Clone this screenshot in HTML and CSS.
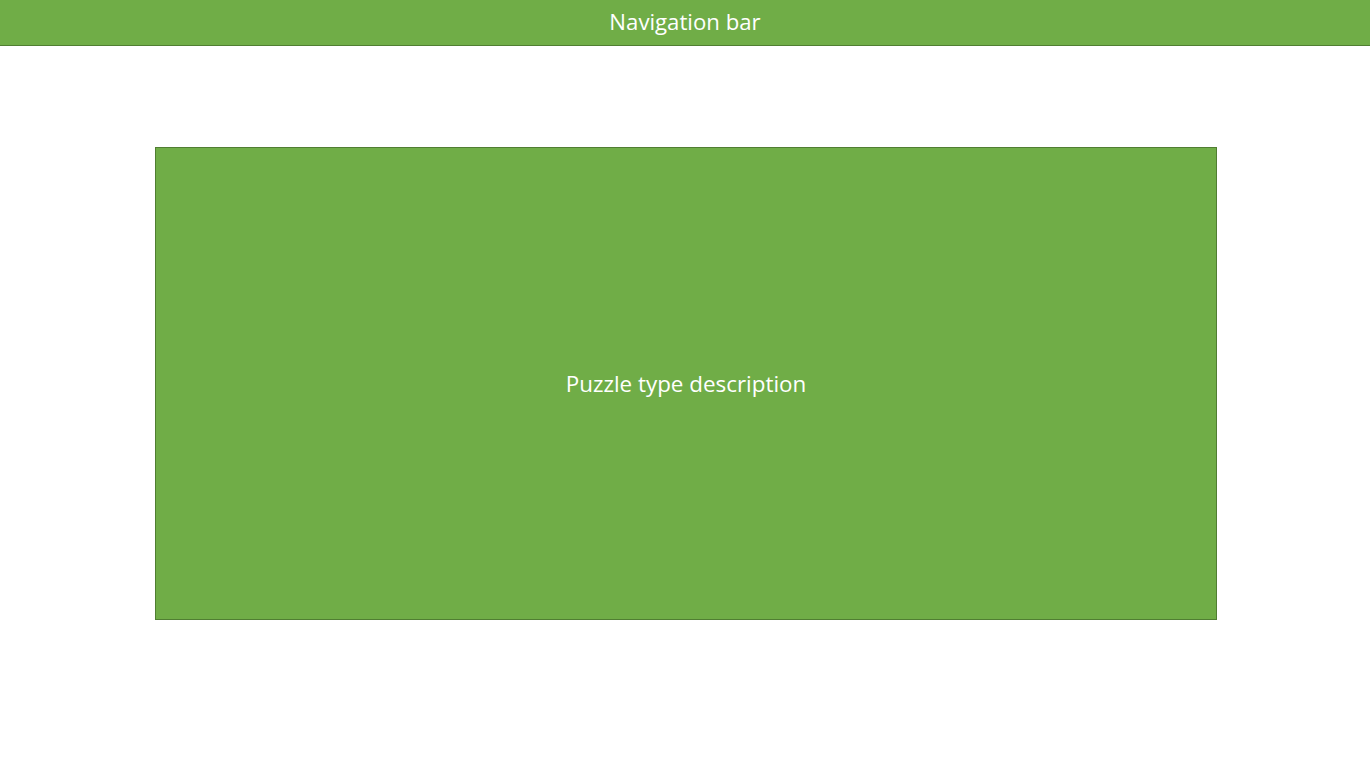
FILE: index.html
```html
<!DOCTYPE html>
<html>
<head>
<meta charset="utf-8">
<link rel="stylesheet" href="styles.css">
</head>
<body>
<header class="navbar">Navigation bar</header>
<main class="content">
  <section class="puzzle-box">Puzzle type description</section>
</main>
</body>
</html>
```
FILE: styles.css
```css
html, body {
  margin: 0;
  padding: 0;
  background: #ffffff;
}
body {
  font-family: "Open Sans", "Noto Sans", sans-serif;
  color: #ffffff;
}
.navbar {
  box-sizing: border-box;
  height: 46px;
  padding-bottom: 2px;
  background: #70ad47;
  border-bottom: 1px solid #507e32;
  display: flex;
  align-items: center;
  justify-content: center;
  font-size: 22.2px;
}
.content {
  padding: 101px 0 0 155px;
}
.puzzle-box {
  box-sizing: border-box;
  width: 1062px;
  height: 473px;
  background: #70ad47;
  border: 1px solid #507e32;
  display: flex;
  align-items: center;
  justify-content: center;
  font-size: 22.4px;
}
```
